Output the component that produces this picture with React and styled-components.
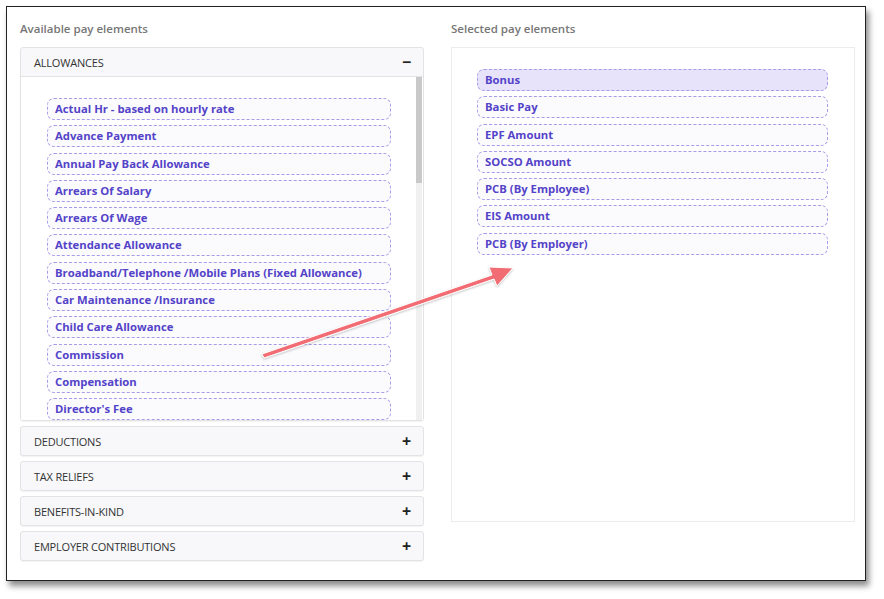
import React from 'react';
import styled, { createGlobalStyle } from 'styled-components';

const Global = createGlobalStyle`
  html, body { margin: 0; background: #fff; }
  body { font-family: "Open Sans", "Liberation Sans", sans-serif; }
`;

const Page = styled.div`
  padding: 6px 18px 18px 6px;
  position: relative;
`;

const Frame = styled.div`
  border: 1.5px solid #222;
  box-shadow: 3px 5px 6px rgba(0, 0, 0, 0.45);
  height: 575px;
  box-sizing: border-box;
  padding: 14px 10px 0 13px;
  display: grid;
  grid-template-columns: 404px 404px;
  column-gap: 27px;
  background: #fff;
`;

const Column = styled.div`
  display: flex;
  flex-direction: column;
`;

const Title = styled.div`
  font-size: 11.5px;
  font-weight: 600;
  color: #777;
  height: 26px;
  line-height: 16px;
`;

const Section = styled.div`
  border: 1px solid #e3e3e6;
  border-radius: 3px;
  background: #f8f8fa;
  margin-bottom: 5px;
  box-shadow: 0 1px 1px rgba(0, 0, 0, 0.05);
`;

const SectionHead = styled.div`
  height: 28px;
  display: flex;
  align-items: center;
  justify-content: space-between;
  padding: 0 12px 0 13px;
  font-size: 11px;
  color: #333;
  letter-spacing: -0.2px;
  border-bottom: ${(p) => (p.open ? '1px solid #e3e3e6' : 'none')};
`;

const Sign = styled.span`
  font-size: 16px;
  font-weight: 700;
  color: #222;
`;

const Scroll = styled.div`
  height: 343px;
  overflow: hidden;
  background: #fff;
  display: flex;
`;

const List = styled.div`
  flex: 1;
  padding: 21px 25px 0 26px;
  display: flex;
  flex-direction: column;
  gap: 5.3px;
`;

const Bar = styled.div`
  width: 6px;
  background: #f0f0f0;
  margin-right: 1px;
  display: flex;
  flex-direction: column;
  & > div {
    height: 106px;
    background: #c9c9c9;
  }
`;

const Item = styled.div`
  height: 22px;
  box-sizing: border-box;
  flex: none;
  border: 1px dashed #a89be8;
  border-radius: 7px;
  background: ${(p) => (p.active ? '#e6e3fb' : '#fbfbfe')};
  color: #5443c8;
  font-weight: 700;
  font-size: 11.3px;
  line-height: 20px;
  padding-left: 7px;
  white-space: nowrap;
`;

const Panel = styled.div`
  border: 1px solid #ececef;
  height: 452px;
  padding: 21px 26px 0 25px;
  display: flex;
  flex-direction: column;
  gap: 5.3px;
`;

const Arrow = styled.svg`
  position: absolute;
  left: 0;
  top: 0;
  pointer-events: none;
`;

const allowances = [
  'Actual Hr - based on hourly rate', 'Advance Payment', 'Annual Pay Back Allowance',
  'Arrears Of Salary', 'Arrears Of Wage', 'Attendance Allowance',
  'Broadband/Telephone /Mobile Plans (Fixed Allowance)', 'Car Maintenance /Insurance',
  'Child Care Allowance', 'Commission', 'Compensation', "Director's Fee",
];
const selected = ['Bonus', 'Basic Pay', 'EPF Amount', 'SOCSO Amount', 'PCB (By Employee)', 'EIS Amount', 'PCB (By Employer)'];
const others = ['DEDUCTIONS', 'TAX RELIEFS', 'BENEFITS-IN-KIND', 'EMPLOYER CONTRIBUTIONS'];

export default function App() {
  return (
    <Page>
      <Global />
      <Frame>
        <Column>
          <Title>Available pay elements</Title>
          <Section>
            <SectionHead open>ALLOWANCES<Sign>−</Sign></SectionHead>
            <Scroll>
              <List>{allowances.map((a) => <Item key={a}>{a}</Item>)}</List>
              <Bar><div /></Bar>
            </Scroll>
          </Section>
          {others.map((o) => (
            <Section key={o}><SectionHead>{o}<Sign>+</Sign></SectionHead></Section>
          ))}
        </Column>
        <Column>
          <Title>Selected pay elements</Title>
          <Panel>
            {selected.map((s, i) => <Item key={s} active={i === 0}>{s}</Item>)}
          </Panel>
        </Column>
      </Frame>
      <Arrow width="884" height="599">
        <defs>
          <filter id="sh"><feDropShadow dx="0" dy="1" stdDeviation="1" floodColor="#000" floodOpacity="0.25" /></filter>
        </defs>
        <g filter="url(#sh)" fill="#f26d73" stroke="#fff" strokeWidth="1">
          <path d="M262 354 L492 275 L489 267 L513 268 L497 286 L494 279 L264 358 Z" />
        </g>
      </Arrow>
    </Page>
  );
}
